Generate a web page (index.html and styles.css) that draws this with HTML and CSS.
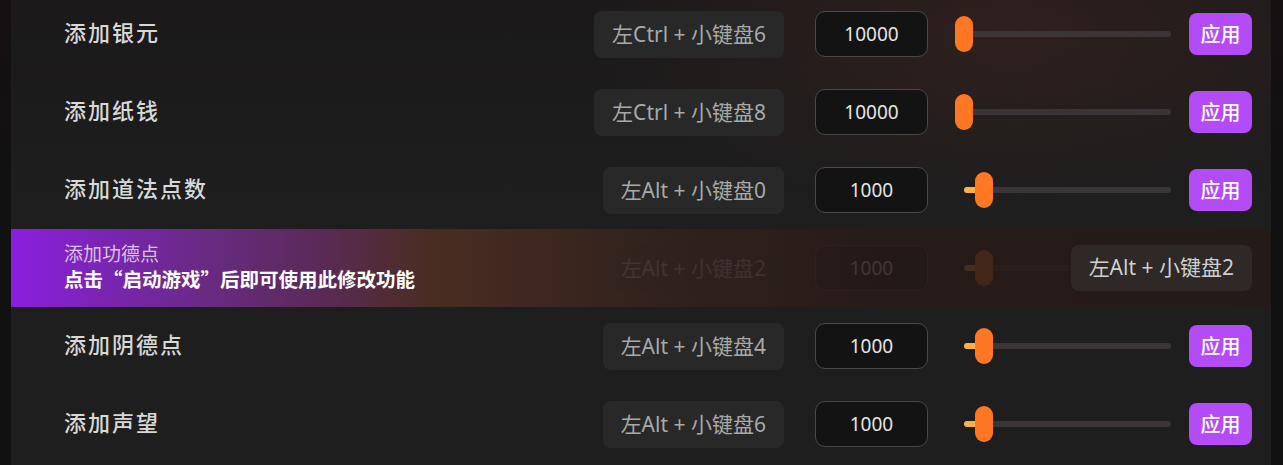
FILE: index.html
```html
<!DOCTYPE html>
<html lang="zh-CN">
<head>
 <meta charset="UTF-8">
 <title>修改功能</title>
 <link rel="stylesheet" href="styles.css">
</head>
<body>
 <div class="frame">
  <main class="panel">
   <div class="cheat-list">

    <div class="cheat-row">
     <div class="cheat-label">添加银元</div>
     <div class="cheat-controls">
      <div class="hotkey">左Ctrl + 小键盘6</div>
      <div class="amount">10000</div>
      <div class="slider">
       <div class="slider-track"><div class="slider-fill" style="width:0px"></div></div>
       <div class="slider-thumb" style="left:0px"></div>
      </div>
      <button class="apply-btn">应用</button>
     </div>
    </div>

    <div class="cheat-row">
     <div class="cheat-label">添加纸钱</div>
     <div class="cheat-controls">
      <div class="hotkey">左Ctrl + 小键盘8</div>
      <div class="amount">10000</div>
      <div class="slider">
       <div class="slider-track"><div class="slider-fill" style="width:0px"></div></div>
       <div class="slider-thumb" style="left:0px"></div>
      </div>
      <button class="apply-btn">应用</button>
     </div>
    </div>

    <div class="cheat-row">
     <div class="cheat-label">添加道法点数</div>
     <div class="cheat-controls">
      <div class="hotkey">左Alt + 小键盘0</div>
      <div class="amount">1000</div>
      <div class="slider">
       <div class="slider-track"><div class="slider-fill" style="width:20px"></div></div>
       <div class="slider-thumb" style="left:20px"></div>
      </div>
      <button class="apply-btn">应用</button>
     </div>
    </div>

    <div class="cheat-row locked">
     <div class="cheat-label">
      <div class="locked-name">添加功德点</div>
      <div class="locked-hint">点击“启动游戏”后即可使用此修改功能</div>
     </div>
     <div class="cheat-controls">
      <div class="hotkey">左Alt + 小键盘2</div>
      <div class="amount">1000</div>
      <div class="slider">
       <div class="slider-track"><div class="slider-fill" style="width:20px"></div></div>
       <div class="slider-thumb" style="left:20px"></div>
      </div>
      <button class="apply-btn">应用</button>
     </div>
     <div class="hotkey-badge">左Alt + 小键盘2</div>
    </div>

    <div class="cheat-row">
     <div class="cheat-label">添加阴德点</div>
     <div class="cheat-controls">
      <div class="hotkey">左Alt + 小键盘4</div>
      <div class="amount">1000</div>
      <div class="slider">
       <div class="slider-track"><div class="slider-fill" style="width:20px"></div></div>
       <div class="slider-thumb" style="left:20px"></div>
      </div>
      <button class="apply-btn">应用</button>
     </div>
    </div>

    <div class="cheat-row">
     <div class="cheat-label">添加声望</div>
     <div class="cheat-controls">
      <div class="hotkey">左Alt + 小键盘6</div>
      <div class="amount">1000</div>
      <div class="slider">
       <div class="slider-track"><div class="slider-fill" style="width:20px"></div></div>
       <div class="slider-thumb" style="left:20px"></div>
      </div>
      <button class="apply-btn">应用</button>
     </div>
    </div>

   </div>
  </main>
 </div>
</body>
</html>
```

FILE: styles.css
```css
body {
 margin: 0;
 background-color: #111;
 font-family: "Noto Sans CJK SC", "Noto Sans", sans-serif;
 color: #ddd;
 overflow: hidden;
}

.frame {
 height: 465px;
 padding: 0 12px 0 11px;
 background: linear-gradient(to bottom, #161011, #111 40%);
}

.panel {
 height: 100%;
 overflow: hidden;
 background:
  radial-gradient(ellipse 560px 240px at 1000px 30px, rgba(70, 40, 34, 0.45), transparent 75%),
  linear-gradient(to bottom, #1b191a, #1e1e1e 45%);
}

.cheat-list {
 margin-top: -5px;
}

.cheat-row {
 position: relative;
 display: flex;
 align-items: center;
 height: 78px;
 padding: 0 19px 0 53px;
}

.cheat-label {
 flex: 1;
 margin-top: -6px;
 font-size: 22px;
 font-weight: 500;
 letter-spacing: 2px;
 color: #d8d8d8;
}

.cheat-controls {
 display: flex;
 align-items: center;
}

.hotkey {
 height: 47px;
 line-height: 46px;
 padding: 0 18px;
 border-radius: 8px;
 background-color: #282828;
 color: #a9a9a9;
 font-family: "Noto Sans", "Noto Sans CJK SC", sans-serif;
 font-size: 21px;
 white-space: nowrap;
}

.amount {
 box-sizing: border-box;
 width: 113px;
 height: 46px;
 line-height: 44px;
 margin-left: 31px;
 border: 1.5px solid #4a4848;
 border-radius: 10px;
 background-color: #141313;
 color: #e4e4e4;
 font-family: "Noto Sans", sans-serif;
 font-size: 19px;
 text-align: center;
}

.slider {
 position: relative;
 width: 216px;
 height: 36px;
 margin-left: 27px;
 display: flex;
 align-items: center;
}

.slider-track {
 flex: 1;
 height: 6px;
 margin-left: 9px;
 border-radius: 3px;
 background-color: #3a3536;
}

.slider-fill {
 height: 100%;
 border-radius: 3px;
 background-color: #ffb04a;
}

.slider-thumb {
 position: absolute;
 top: 0;
 width: 18px;
 height: 36px;
 border-radius: 9px;
 background-color: #ff7722;
}

.apply-btn {
 width: 63px;
 height: 42px;
 margin-left: 18px;
 padding: 0 0 2px;
 border: none;
 border-radius: 8px;
 background-color: #b34bf7;
 color: #fff;
 font-family: inherit;
 font-size: 20px;
 font-weight: 500;
 cursor: pointer;
}

/* row that can't be used until the game is started */
.cheat-row.locked {
 background: linear-gradient(to right, #8a1fe0 0%, #6a2a85 15%, #5a2a55 25%, #4a2d22 33%, #33221d 50%, #261b18 70%, #241a17 100%);
}

.cheat-row.locked .cheat-label {
 margin-top: -4px;
 letter-spacing: 0;
}

.locked-name {
 font-size: 19px;
 font-weight: 400;
 line-height: 26px;
 color: #d7c3e6;
}

.locked-hint {
 font-size: 19.5px;
 font-weight: 700;
 line-height: 26px;
 color: #fff;
}

.cheat-row.locked .cheat-controls {
 opacity: 0.13;
}

.cheat-row.locked .apply-btn {
 visibility: hidden;
}

.hotkey-badge {
 position: absolute;
 right: 19px;
 top: 16px;
 height: 46px;
 line-height: 45px;
 padding: 0 18px;
 border-radius: 8px;
 background-color: #2e2826;
 color: #d0d0d0;
 font-family: "Noto Sans", "Noto Sans CJK SC", sans-serif;
 font-size: 21px;
 white-space: nowrap;
}
```
